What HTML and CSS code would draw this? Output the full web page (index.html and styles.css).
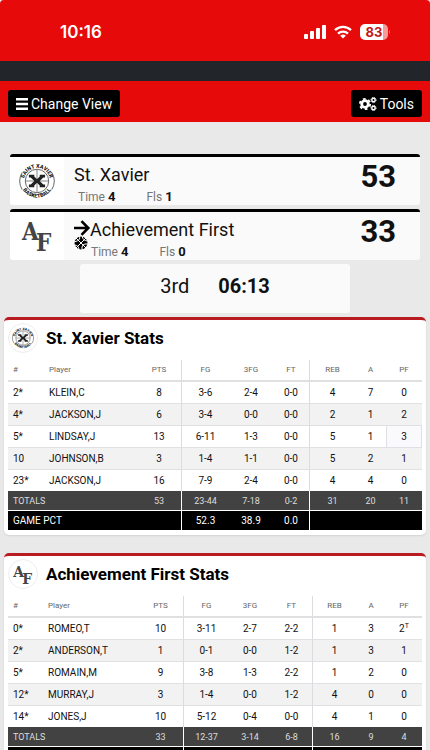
FILE: index.html
```html
<!DOCTYPE html>
<html lang="en">

<head>
    <meta charset="UTF-8">
    <meta name="viewport" content="width=device-width, initial-scale=1.0">
    <title>Live Stats</title>
    <link rel="stylesheet" href="styles.css">
</head>

<body>
    <!-- shared logos -->
    <svg class="defs" width="0" height="0" aria-hidden="true">
        <defs>
            <path id="arcTop" d="M5.500 20a14.500 14.500 0 0 1 29 0" />
            <path id="arcBottom" d="M1.500 20a18.500 18.500 0 0 0 37 0" />
        </defs>
        <symbol id="logo-sx" viewBox="0 0 40 40">
            <path d="M3.500 10.500a19 19 0 0 0 0 19M36.500 10.500a19 19 0 0 1 0 19" fill="none" stroke="#555" stroke-width="1" />
            <circle cx="20" cy="20" r="13" fill="none" stroke="#555" stroke-width="1" />
            <path d="M20 7v26M7 20h26" stroke="#777" stroke-width="1" />
            <path d="M11 13h6v2l3 3 3-3v-2h6v3h-2l-4 4 4 4h2v3h-6v-2l-3-3-3 3v2h-6v-3h2l4-4-4-4h-2z" fill="#222" />
            <text class="logo-ring" text-anchor="middle"><textPath href="#arcTop" startOffset="50%">SAINT XAVIER</textPath></text>
            <text class="logo-ring" text-anchor="middle"><textPath href="#arcBottom" startOffset="50%">BASKETBALL</textPath></text>
        </symbol>
        <symbol id="logo-af" viewBox="0 0 28 34">
            <text class="logo-letter" x="-1" y="21">A</text>
            <text class="logo-letter" x="13" y="32">F</text>
        </symbol>
    </svg>

    <div class="status-bar">
        <span class="time">10:16</span>
        <div class="status-icons">
            <svg width="22" height="14" viewBox="0 0 22 14" fill="#fff">
                <rect x="0" y="9" width="4" height="5" rx="1" />
                <rect x="6" y="6" width="4" height="8" rx="1" />
                <rect x="12" y="3" width="4" height="11" rx="1" />
                <rect x="18" y="0" width="4" height="14" rx="1" />
            </svg>
            <svg width="18" height="14" viewBox="0 0 18 14" fill="none" stroke="#fff" stroke-width="2.300">
                <path d="M1 5.200a11.500 11.500 0 0 1 16 0" />
                <path d="M4 8.600a7.200 7.200 0 0 1 10 0" />
                <path d="M9 13.600L6.200 10.800a4 4 0 0 1 5.600 0z" fill="#fff" stroke="none" />
            </svg>
            <svg width="30" height="16" viewBox="0 0 30 16">
                <path d="M5 0h18v16H5a5 5 0 0 1-5-5V5a5 5 0 0 1 5-5z" fill="#fff" />
                <path d="M23 0a5 5 0 0 1 5 5v6a5 5 0 0 1-5 5z" fill="#f79a9a" />
                <path d="M29 5.500q1.600 2.500 0 5z" fill="#f79a9a" />
                <text class="battery" x="14" y="13" text-anchor="middle">83</text>
            </svg>
        </div>
    </div>
    <div class="strip"></div>

    <header class="toolbar">
        <button type="button">
            <svg width="12" height="12" viewBox="0 0 12 12" fill="#fff">
                <path d="M0 0h12v2.400H0zM0 4.800h12v2.400H0zM0 9.600h12V12H0z" />
            </svg>
            Change View
        </button>
        <button type="button">
            <svg width="18" height="14" viewBox="0 0 18 14" fill="none" stroke="#fff">
                <circle cx="6" cy="7" r="3.300" stroke-width="2.800" />
                <circle cx="6" cy="7" r="5.200" stroke-width="1.800" stroke-dasharray="2.700 2.745" />
                <circle cx="14.500" cy="3" r="1.700" stroke-width="1.400" />
                <circle cx="14.500" cy="3" r="2.600" stroke-width="1" stroke-dasharray="1.100 0.942" />
                <circle cx="14.500" cy="11" r="1.700" stroke-width="1.400" />
                <circle cx="14.500" cy="11" r="2.600" stroke-width="1" stroke-dasharray="1.100 0.942" />
            </svg>
            Tools
        </button>
    </header>

    <main>
        <section class="scoreboard">
            <div class="team">
                <div class="team-logo"><svg width="36" height="36"><use href="#logo-sx" /></svg></div>
                <div class="team-info">
                    <div class="team-name">St. Xavier</div>
                    <div class="team-meta">
                        <span>Time <b>4</b></span>
                        <span>Fls <b>1</b></span>
                    </div>
                </div>
                <div class="score">53</div>
            </div>
            <div class="team">
                <div class="team-logo"><svg width="28" height="34"><use href="#logo-af" /></svg></div>
                <div class="possession">
                    <svg width="16" height="16" viewBox="0 0 16 16" fill="none" stroke="#000" stroke-width="2.600">
                        <path d="M0 8h14M7.500 1.200L14.300 8l-6.800 6.800" />
                    </svg>
                    <svg width="14" height="14" viewBox="0 0 14 14">
                        <circle cx="7" cy="7" r="6.500" fill="#000" />
                        <path d="M2 2l10 10M12 2L2 12M5 0q3 4-5 6M14 8q-7-1-6 6M8 0q1 5 6 5M0 9q5 0 5 5" fill="none" stroke="#fff" stroke-width="1" />
                    </svg>
                </div>
                <div class="team-info">
                    <div class="team-name">Achievement First</div>
                    <div class="team-meta">
                        <span>Time <b>4</b></span>
                        <span>Fls <b>0</b></span>
                    </div>
                </div>
                <div class="score">33</div>
            </div>
            <div class="clock">
                <span>3rd</span>
                <b>06:13</b>
            </div>
        </section>

        <section class="panel">
            <div class="panel-head">
                <div class="badge"><svg width="22" height="22"><use href="#logo-sx" /></svg></div>
                <h2>St. Xavier Stats</h2>
            </div>
            <table>
                <colgroup>
                    <col width="36"><col width="93"><col width="45"><col width="47"><col width="44">
                    <col width="37"><col width="45"><col width="31"><col width="36">
                </colgroup>
                <thead>
                    <tr><th>#</th><th>Player</th><th>PTS</th><th>FG</th><th>3FG</th><th>FT</th><th>REB</th><th>A</th><th>PF</th></tr>
                </thead>
                <tbody>
                    <tr><td>2*</td><td>KLEIN,C</td><td>8</td><td>3-6</td><td>2-4</td><td>0-0</td><td>4</td><td>7</td><td>0</td></tr>
                    <tr><td>4*</td><td>JACKSON,J</td><td>6</td><td>3-4</td><td>0-0</td><td>0-0</td><td>2</td><td>1</td><td>2</td></tr>
                    <tr><td>5*</td><td>LINDSAY,J</td><td>13</td><td>6-11</td><td>1-3</td><td>0-0</td><td>5</td><td>1</td><td class="changed">3</td></tr>
                    <tr><td>10</td><td>JOHNSON,B</td><td>3</td><td>1-4</td><td>1-1</td><td>0-0</td><td>5</td><td>2</td><td>1</td></tr>
                    <tr><td>23*</td><td>JACKSON,J</td><td>16</td><td>7-9</td><td>2-4</td><td>0-0</td><td>4</td><td>4</td><td>0</td></tr>
                </tbody>
                <tfoot>
                    <tr class="totals"><td colspan="2">TOTALS</td><td>53</td><td>23-44</td><td>7-18</td><td>0-2</td><td>31</td><td>20</td><td>11</td></tr>
                    <tr class="pct"><td colspan="2">GAME PCT</td><td></td><td>52.3</td><td>38.9</td><td>0.0</td><td></td><td></td><td></td></tr>
                </tfoot>
            </table>
        </section>

        <section class="panel">
            <div class="panel-head">
                <div class="badge"><svg width="18" height="22"><use href="#logo-af" /></svg></div>
                <h2>Achievement First Stats</h2>
            </div>
            <table>
                <colgroup>
                    <col width="35"><col width="95"><col width="46"><col width="45"><col width="42">
                    <col width="42"><col width="43"><col width="30"><col width="36">
                </colgroup>
                <thead>
                    <tr><th>#</th><th>Player</th><th>PTS</th><th>FG</th><th>3FG</th><th>FT</th><th>REB</th><th>A</th><th>PF</th></tr>
                </thead>
                <tbody>
                    <tr><td>0*</td><td>ROMEO,T</td><td>10</td><td>3-11</td><td>2-7</td><td>2-2</td><td>1</td><td>3</td><td>2<sup>T</sup></td></tr>
                    <tr><td>2*</td><td>ANDERSON,T</td><td>1</td><td>0-1</td><td>0-0</td><td>1-2</td><td>1</td><td>3</td><td>1</td></tr>
                    <tr><td>5*</td><td>ROMAIN,M</td><td>9</td><td>3-8</td><td>1-3</td><td>2-2</td><td>1</td><td>2</td><td>0</td></tr>
                    <tr><td>12*</td><td>MURRAY,J</td><td>3</td><td>1-4</td><td>0-0</td><td>1-2</td><td>4</td><td>0</td><td>0</td></tr>
                    <tr><td>14*</td><td>JONES,J</td><td>10</td><td>5-12</td><td>0-4</td><td>0-0</td><td>4</td><td>1</td><td>0</td></tr>
                </tbody>
                <tfoot>
                    <tr class="totals"><td colspan="2">TOTALS</td><td>33</td><td>12-37</td><td>3-14</td><td>6-8</td><td>16</td><td>9</td><td>4</td></tr>
                    <tr class="pct"><td colspan="2">GAME PCT</td><td></td><td>32.4</td><td>21.4</td><td>75.0</td><td></td><td></td><td></td></tr>
                </tfoot>
            </table>
        </section>
    </main>
</body>

</html>
```
FILE: styles.css
```css
* {
    box-sizing: border-box;
}

body {
    margin: 0;
    background-color: #e9e9e9;
    color: #111;
    font-family: Roboto, "Liberation Sans", sans-serif;
}

.defs {
    display: block;
}

svg {
    display: block;
    flex: none;
}

svg,
symbol {
    overflow: visible;
}

/* top bars */
.status-bar {
    display: flex;
    justify-content: space-between;
    align-items: center;
    height: 61px;
    padding: 2px 40px 0 60px;
    background-color: #e60a0a;
    border-radius: 4px 4px 0 0;
}

.time {
    color: #fff;
    font-family: Inter, sans-serif;
    font-size: 17px;
    font-weight: 600;
}

.status-icons {
    display: flex;
    align-items: center;
    gap: 8px;
}

.battery {
    font-family: Inter, sans-serif;
    font-size: 13px;
    font-weight: 700;
    fill: #c01818;
}

.strip {
    height: 20px;
    background-color: #222529;
}

.toolbar {
    display: flex;
    justify-content: space-between;
    padding: 9px 8px 5px;
    background-color: #e60a0a;
}

.toolbar button {
    display: flex;
    align-items: center;
    gap: 3px;
    height: 27px;
    padding: 0 8px;
    border: none;
    border-radius: 3px;
    background-color: #000;
    color: #fff;
    font-family: inherit;
    font-size: 14px;
    cursor: pointer;
}

/* scoreboard */
.scoreboard {
    display: flex;
    flex-direction: column;
    gap: 4px;
    padding: 32px 10px 4px;
}

.team {
    display: flex;
    height: 51px;
    background-color: #fafafa;
    border-top: 3px solid #000;
    border-radius: 3px;
    overflow: hidden;
}

.team-logo {
    display: flex;
    justify-content: center;
    align-items: center;
    width: 54px;
    margin-right: 10px;
    background-color: #fff;
}

.team-info {
    flex: 1;
    padding-top: 6px;
}

.team-name {
    font-size: 18px;
    line-height: 24px;
}

.team-meta {
    display: flex;
    gap: 31px;
    padding-left: 4px;
    color: #777;
    font-size: 12px;
    line-height: 20px;
}

.team-meta b {
    color: #111;
    font-size: 13px;
}

.possession {
    padding-top: 8px;
}

.possession + .team-info .team-meta {
    padding-left: 1px;
}

.score {
    padding: 2px 24px 0 0;
    font-size: 31px;
    font-weight: 700;
    line-height: 36px;
}

.clock {
    display: flex;
    justify-content: center;
    gap: 29px;
    width: 66%;
    height: 49px;
    margin: 0 auto;
    background-color: #fafafa;
    border-radius: 3px;
    font-size: 20px;
    line-height: 44px;
}

/* stats panels */
.panel {
    margin: 0 4px 18px;
    padding: 3px 4px 4px;
    background-color: #fff;
    border-top: 3px solid #b91c20;
    border-radius: 5px;
    box-shadow: 0 1px 2px rgba(0, 0, 0, 0.1);
}

.panel-head {
    display: flex;
    align-items: center;
    gap: 8px;
    height: 37px;
    padding-bottom: 8px;
}

.badge {
    display: flex;
    justify-content: center;
    align-items: center;
    width: 30px;
    height: 30px;
    border: 1px solid #eee;
    border-radius: 50%;
}

h2 {
    margin: 0;
    color: #000;
    font-size: 17px;
    font-weight: 700;
}

table {
    width: 100%;
    table-layout: fixed;
    border-spacing: 0;
    font-size: 10px;
}

th,
td {
    height: 22px;
    padding: 0;
    border-bottom: 1px solid #e0e0e4;
    text-align: center;
    line-height: 12px;
    white-space: nowrap;
}

th {
    border-bottom: 2px solid #e0e0e2;
    color: #666;
    font-size: 8px;
    font-weight: 400;
}

tr > :first-child {
    padding-left: 5px;
    text-align: left;
}

th:nth-child(2),
tbody td:nth-child(2) {
    padding-left: 5px;
    text-align: left;
}

th:nth-child(3),
tbody td:nth-child(3),
th:nth-child(6),
tbody td:nth-child(6) {
    border-right: 1px solid #dcdce0;
}

tbody tr:nth-child(even) {
    background-color: #f2f2f3;
}

tbody tr:last-child td {
    border-bottom: none;
    height: 21px;
}

tbody .changed {
    background-color: #fafafc;
    border-left: 1px solid #e0e0e4;
    border-right: 1px solid #e0e0e4;
}

sup {
    font-size: 7px;
    line-height: 0;
}

tfoot td {
    height: 20px;
    border-bottom: 1px solid #fff;
    color: #fff;
}

tfoot td:nth-child(2),
tfoot td:nth-child(5) {
    border-right: 1px solid #fff;
}

.totals {
    background-color: #424242;
    font-size: 9px;
}

.totals td {
    color: #ddd;
}

.pct {
    background-color: #000;
}

.logo-ring {
    font-family: Roboto, sans-serif;
    font-size: 6px;
    font-weight: 900;
    fill: #222;
}

.logo-letter {
    font-family: "DejaVu Serif Condensed", "DejaVu Serif", serif;
    font-size: 24px;
    font-weight: 700;
    fill: #444;
}
```
